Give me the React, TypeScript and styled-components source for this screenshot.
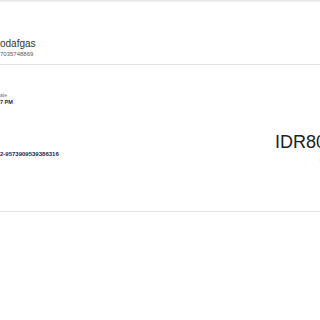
import React from "react";
import styled, { createGlobalStyle } from "styled-components";

const GlobalStyle = createGlobalStyle`
	html, body {
		margin: 0;
		padding: 0;
		background: #ffffff;
		overflow: hidden;
	}
	body {
		font-family: "Liberation Sans", Arial, sans-serif;
	}
`;

const Page = styled.div`
	width: 380px;
	padding-right: 19px;
	box-sizing: border-box;
	background: #ffffff;
`;

const TopShade = styled.div`
	height: 3px;
	background: linear-gradient(#e4e4e4, #ffffff);
`;

const Header = styled.div`
	padding: 34px 0 6px 0;
`;

const Name = styled.div`
	font-size: 10px;
	line-height: 13px;
	color: #333333;
`;

const Phone = styled.div`
	font-size: 6px;
	line-height: 8px;
	color: #5a5a5a;
`;

const Divider = styled.div`
	height: 1px;
	background: #e2e2ea;
	margin-right: -19px;
`;

const Details = styled.div`
	display: flex;
	justify-content: space-between;
	height: 146px;
`;

const Left = styled.div`
	display: flex;
	flex-direction: column;
	padding-top: 27px;
	gap: 45px;
`;

const Field = styled.div`
	display: flex;
	flex-direction: column;
	gap: 1px;
`;

const Label = styled.div`
	font-size: 5px;
	line-height: 6px;
	color: #6f6f6f;
`;

const Value = styled.div<{ $size?: number }>`
	font-size: ${({ $size }) => $size ?? 5.5}px;
	line-height: 7px;
	font-weight: 700;
	color: #1c2a48;
`;

const Right = styled.div`
	display: flex;
	flex-direction: column;
	align-items: flex-end;
	padding-top: 67px;
	gap: 5px;
`;

const Amount = styled.div`
	font-size: 18px;
	line-height: 20px;
	color: #222222;
`;

const AmountLabel = styled.div`
	font-size: 5px;
	line-height: 6px;
	color: #444444;
`;

export default function App() {
	return (
		<>
			<GlobalStyle />
			<Page>
				<TopShade />
				<Header>
					<Name>odafgas</Name>
					<Phone>7035748869</Phone>
				</Header>
				<Divider />
				<Details>
					<Left>
						<Field>
							<Label>ate</Label>
							<Value>7 PM</Value>
						</Field>
						<Value $size={6}>2-9573909539386316</Value>
					</Left>
					<Right>
						<Amount>IDR80,000</Amount>
						<AmountLabel>Nominal Transaksi</AmountLabel>
					</Right>
				</Details>
				<Divider />
			</Page>
		</>
	);
}
